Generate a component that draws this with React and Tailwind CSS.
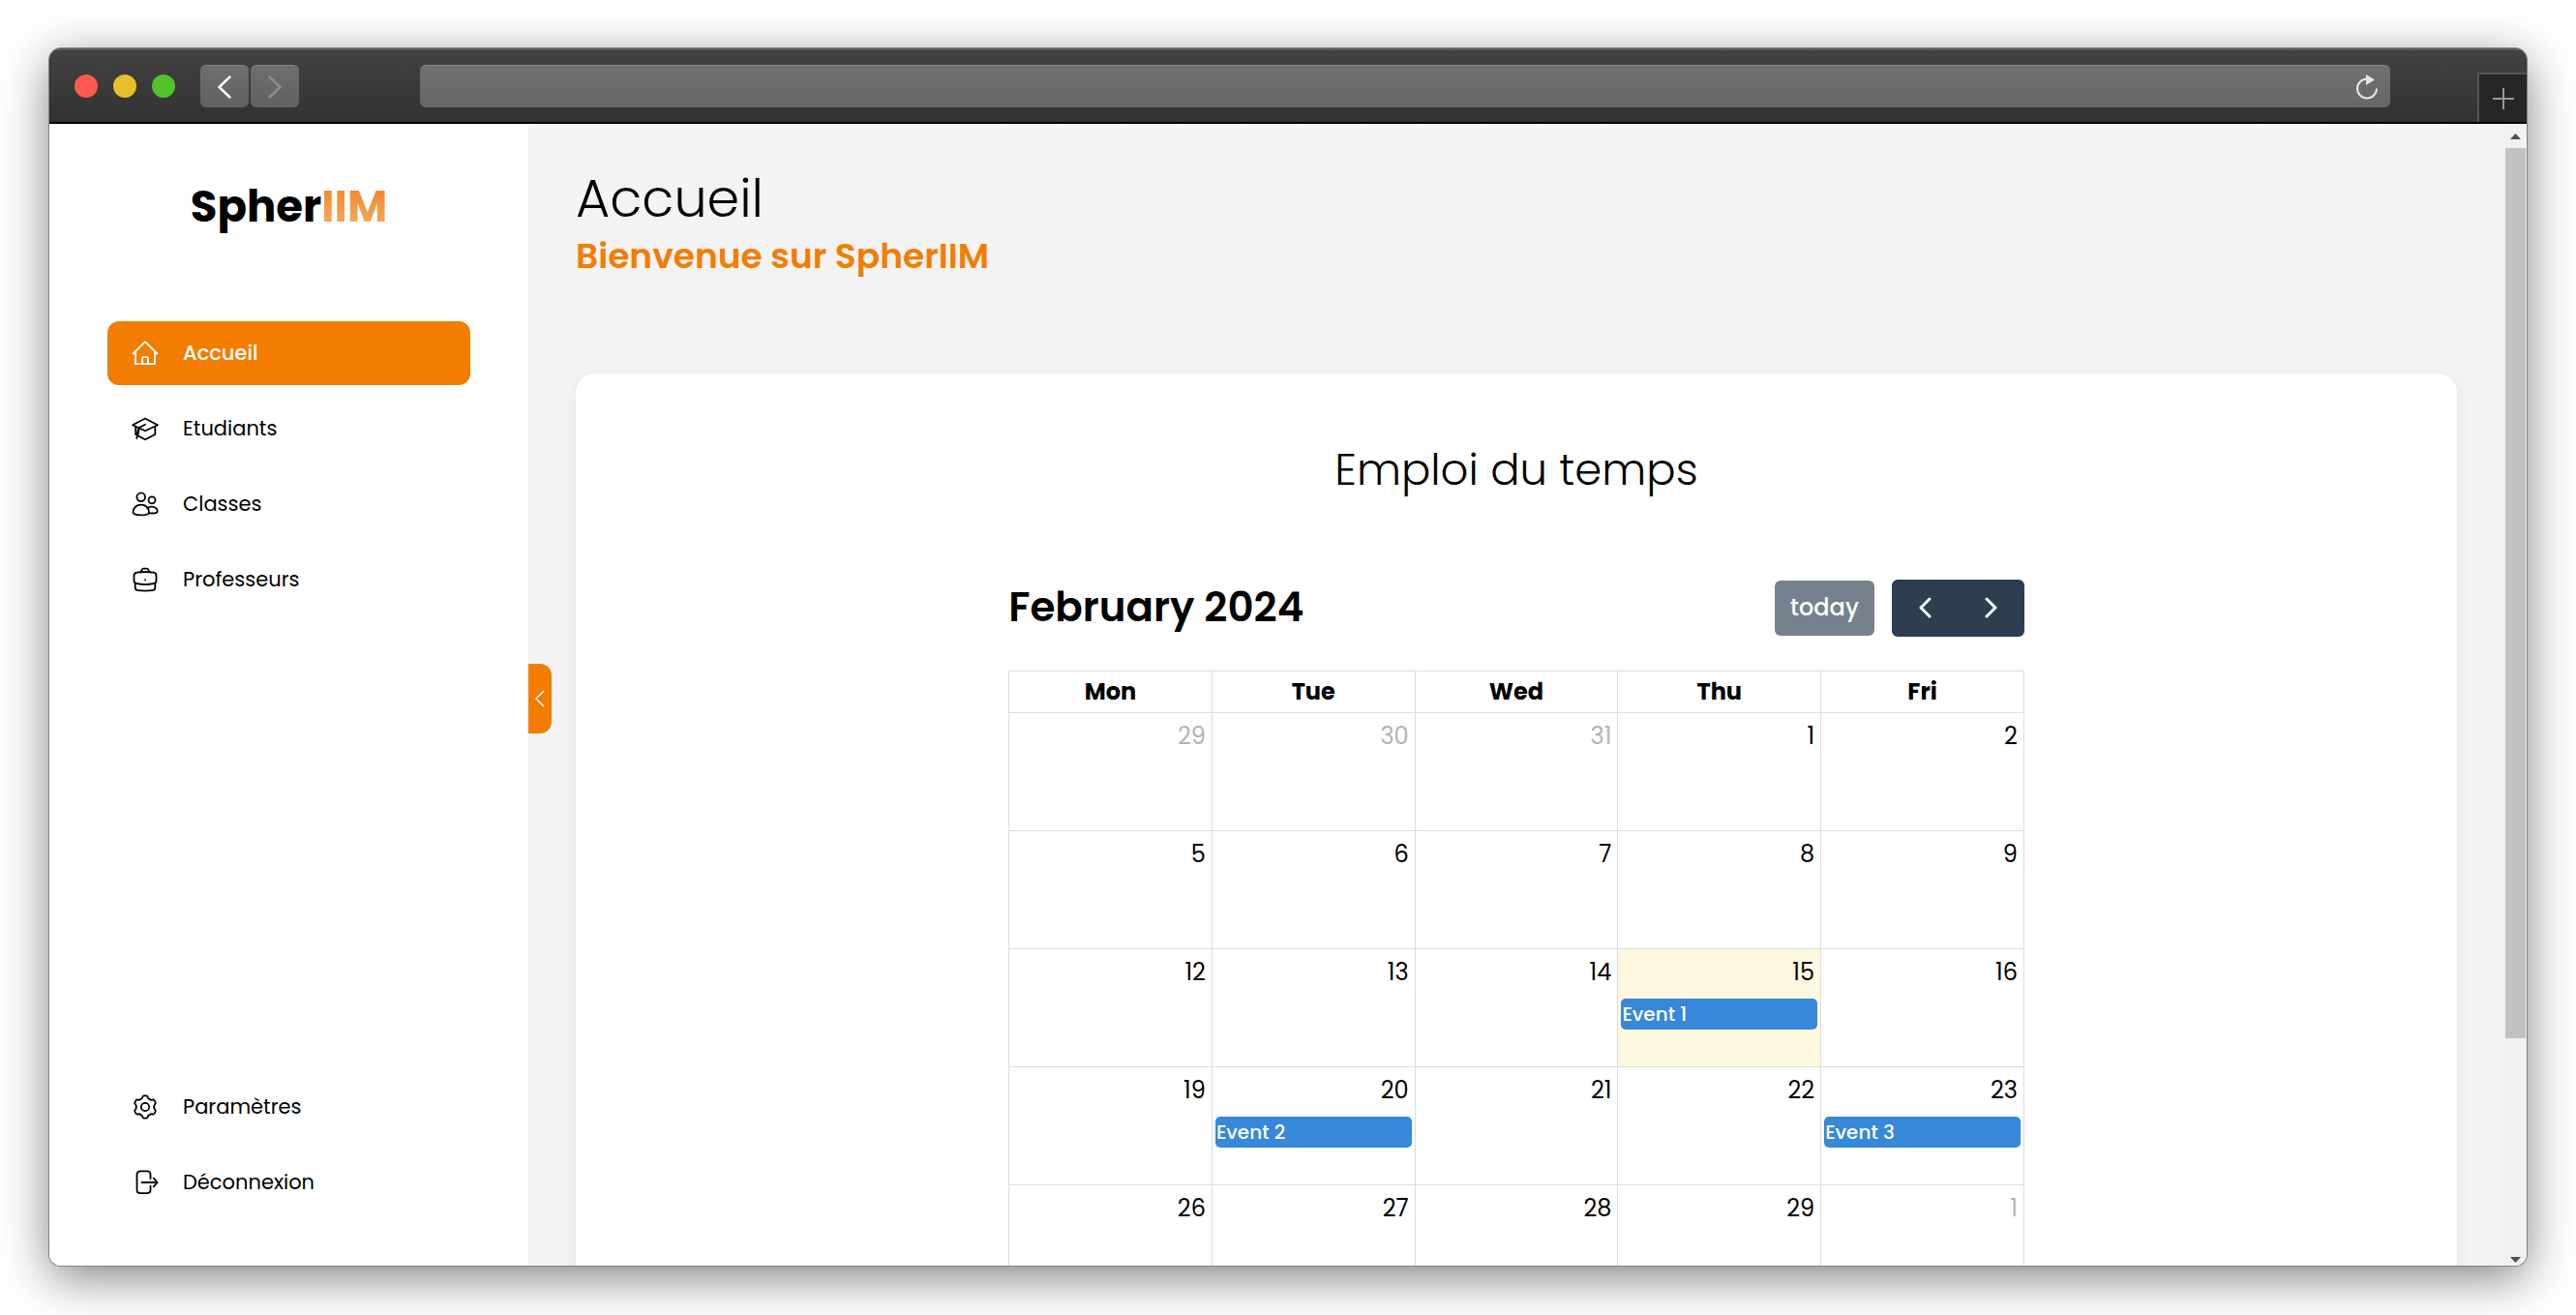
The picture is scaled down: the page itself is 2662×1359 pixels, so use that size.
const stroke = {
  viewBox: "0 0 30 30",
  fill: "none",
  stroke: "currentColor",
  strokeWidth: 1.8,
  strokeLinecap: "round",
  strokeLinejoin: "round",
  className: "size-[30px] shrink-0",
  "aria-hidden": true,
};

function HomeIcon() {
  return (
    <svg {...stroke}>
      <path d="M2.500 15.500 15 3.200l12.500 12.300" />
      <path d="M5 13.500V26.200h20V13.500" />
      <path d="M12 26v-5.500a1.500 1.500 0 0 1 1.500-1.500h3a1.500 1.500 0 0 1 1.500 1.500V26" />
    </svg>
  );
}

function StudentIcon() {
  return (
    <svg {...stroke}>
      <path d="M2 11.200 15 4.500l13 6.700-13 6z" />
      <path d="M5.200 13v8L15 26.300l10.300-5.300v-8" />
      <path d="M15 10.700 9 13.700C7.500 17 8 20.500 6.200 25" />
      <path d="M8.500 14.500 7 21" strokeWidth="2.500" />
    </svg>
  );
}

function UsersIcon() {
  return (
    <svg {...stroke}>
      <circle cx="10.700" cy="7.700" r="4.300" />
      <circle cx="22" cy="10.800" r="3.500" />
      <path d="M2.500 23.500c0-5 3.700-7.800 8.200-7.800s8.300 2.800 8.300 7.800c0 1.800-3.800 2.900-8.300 2.900s-8.200-1.100-8.200-2.900Z" />
      <path d="M17.500 19.500c1-1.300 2.700-1.800 4.300-1.800 3.300 0 5.900 2 5.900 4.500 0 1.700-2.700 2.300-5.200 2.300-1.500 0-2.700-.1-3.700-.4" />
    </svg>
  );
}

function BriefcaseIcon() {
  return (
    <svg {...stroke}>
      <path d="M10.500 7.200 11.500 5c.3-.8.900-1.300 1.800-1.300h3.400c.9 0 1.500.5 1.800 1.300l1 2.200" />
      <path d="M6.300 7.700c5.500-.9 11.900-.9 17.400 0 1.900.3 2.800 1.300 2.800 3.200V16c0 2-1.200 2.900-3 3.200-5.500 1.100-11.500 1.100-17 0-1.800-.3-3-1.200-3-3.200v-5.100c0-1.900.900-2.900 2.800-3.200Z" />
      <path d="M4.700 18.700v4.600c0 1.700.8 2.600 2.500 2.800 5.200.6 10.400.6 15.600 0 1.700-.2 2.500-1.100 2.500-2.800v-4.600" />
      <path d="M15 15.200v.1" />
    </svg>
  );
}

const GEAR_TEETH = [0, 60, 120, 180, 240, 300];

function GearIcon() {
  return (
    <svg {...stroke}>
      <circle cx="15" cy="15" r="4.200" />
      {GEAR_TEETH.map((a) => (
        <path
          key={a}
          transform={"rotate(" + a + " 15 15)"}
          d="M10.350 6.950Q12.100 6.300 12.300 4.900 12.500 3.400 14 3.400H16Q17.500 3.400 17.700 4.900 17.900 6.300 19.650 6.950"
        />
      ))}
    </svg>
  );
}

function LogoutIcon() {
  return (
    <svg {...stroke}>
      <path d="M20.500 11V7c0-2.500-1.200-3.700-3.700-3.700h-6.600C7.700 3.300 6.500 4.500 6.500 7v15.500c0 2.500 1.200 3.700 3.700 3.700h6.600c2.500 0 3.700-1.200 3.700-3.700v-3.800" />
      <path d="M11.500 15H27.700M23.700 10.700l4 4.300-4 4.300" />
    </svg>
  );
}

function NavItem({ icon, label, active }) {
  return (
    <li>
      <a
        href="#"
        aria-current={active ? "page" : undefined}
        className={
          "flex h-[66px] items-center gap-6 rounded-xl px-6 text-[21px] " +
          (active ? "bg-[#f27d00] font-medium text-white" : "text-black")
        }
      >
        {icon}
        {label}
      </a>
    </li>
  );
}

function Sidebar() {
  return (
    <aside className="relative flex w-[495px] shrink-0 flex-col bg-white px-[60px] pb-[53px] pt-14">
      <div className="text-center text-[45px] font-bold leading-[60px] text-black">
        Spher
        <span className="bg-linear-to-b from-[#f27d00] to-[#f5b26b] bg-clip-text text-transparent">IIM</span>
      </div>
      <nav className="mt-[88px] flex grow flex-col justify-between">
        <ul className="flex flex-col gap-3">
          <NavItem icon={<HomeIcon />} label="Accueil" active />
          <NavItem icon={<StudentIcon />} label="Etudiants" />
          <NavItem icon={<UsersIcon />} label="Classes" />
          <NavItem icon={<BriefcaseIcon />} label="Professeurs" />
        </ul>
        <ul className="flex flex-col gap-3">
          <NavItem icon={<GearIcon />} label="Paramètres" />
          <NavItem icon={<LogoutIcon />} label="Déconnexion" />
        </ul>
      </nav>
      <button
        aria-label="Réduire le menu"
        className="absolute left-full top-[558px] z-10 flex h-18 w-6 items-center justify-center rounded-r-xl bg-[#f27d00] text-white"
      >
        <svg viewBox="0 0 10 18" className="h-[18px] w-[10px]" fill="none" stroke="currentColor" strokeWidth="1.500">
          <path d="M9 1 1 9l8 8" />
        </svg>
      </button>
    </aside>
  );
}

const DAYS = ["Mon", "Tue", "Wed", "Thu", "Fri"];
const WEEKS = [
  [29, 30, 31, 1, 2],
  [5, 6, 7, 8, 9],
  [12, 13, 14, 15, 16],
  [19, 20, 21, 22, 23],
  [26, 27, 28, 29, 1],
];
const EVENTS = { "2-3": "Event 1", "3-1": "Event 2", "3-4": "Event 3" };
const OTHER_MONTH = ["0-0", "0-1", "0-2", "4-4"];

function Chevron({ d }) {
  return (
    <svg
      viewBox="0 0 14 24"
      className="h-6 w-3.5"
      fill="none"
      stroke="currentColor"
      strokeWidth="3"
      strokeLinecap="round"
      strokeLinejoin="round"
      aria-hidden="true"
    >
      <path d={d} />
    </svg>
  );
}

function Calendar() {
  return (
    <div className="mx-auto w-[54%]">
      <div className="mb-[35px] flex items-center justify-between">
        <h3 className="text-[42px] font-semibold leading-[60px]">February 2024</h3>
        <div className="flex items-center gap-[18px]">
          <button disabled className="h-[57px] rounded-md bg-[#77818d] px-4 text-2xl font-medium text-white">
            today
          </button>
          <div className="flex h-[59px] overflow-hidden rounded-md bg-[#2c3e50] text-white">
            <button aria-label="Mois précédent" className="flex w-[69px] items-center justify-center">
              <Chevron d="M12 3 3 12l9 9" />
            </button>
            <button aria-label="Mois suivant" className="flex w-[68px] items-center justify-center">
              <Chevron d="m2 3 9 9-9 9" />
            </button>
          </div>
        </div>
      </div>
      <table className="w-full table-fixed border-collapse border border-[#ddd] text-2xl">
        <thead>
          <tr className="h-[43px]">
            {DAYS.map((d) => (
              <th key={d} scope="col" className="border border-[#ddd] p-0 font-bold leading-9">
                {d}
              </th>
            ))}
          </tr>
        </thead>
        <tbody>
          {WEEKS.map((week, w) => (
            <tr key={w} className="h-[122px]">
              {week.map((day, d) => {
                const id = w + "-" + d;
                return (
                  <td
                    key={id}
                    className={"border border-[#ddd] p-0 align-top " + (id === "2-3" ? "bg-[#fff8e0]" : "")}
                  >
                    <div
                      className={
                        "px-1.5 pt-1.5 text-right leading-9 " +
                        (OTHER_MONTH.includes(id) ? "text-[#b3b3b3]" : "text-black")
                      }
                    >
                      {day}
                    </div>
                    {EVENTS[id] && (
                      <a
                        href="#"
                        className="mx-[3px] mt-[9px] block rounded-[5px] bg-[#3788d8] px-px text-xl font-medium leading-8 text-white"
                      >
                        {EVENTS[id]}
                      </a>
                    )}
                  </td>
                );
              })}
            </tr>
          ))}
        </tbody>
      </table>
    </div>
  );
}

function BrowserBar() {
  return (
    <header className="flex h-[78px] shrink-0 items-center border-b-2 border-black bg-linear-to-b from-[#424242] to-[#323232] pl-[26px] pt-0.5 shadow-[inset_0_2px_0_#5c5c5c]">
      <div className="flex gap-4">
        <span className="size-6 rounded-full bg-[#ff5a52]" />
        <span className="size-6 rounded-full bg-[#e6c029]" />
        <span className="size-6 rounded-full bg-[#54c22b]" />
      </div>
      <div className="ml-[26px] flex gap-0.5">
        <button
          aria-label="Page précédente"
          className="flex h-11 w-[50px] items-center justify-center rounded-md border-t border-[#808080] bg-linear-to-b from-[#6e6e6e] to-[#616161] text-white"
        >
          <svg viewBox="0 0 14 24" className="h-6 w-3.5" fill="none" stroke="currentColor" strokeWidth="2.500" strokeLinecap="round">
            <path d="M12.500 1.500 1.500 12l11 10.500" />
          </svg>
        </button>
        <button
          aria-label="Page suivante"
          className="flex h-11 w-[50px] items-center justify-center rounded-md border-t border-[#808080] bg-linear-to-b from-[#6e6e6e] to-[#616161] text-[#8e8e8e]"
        >
          <svg viewBox="0 0 14 24" className="h-6 w-3.5" fill="none" stroke="currentColor" strokeWidth="2.500" strokeLinecap="round">
            <path d="m1.500 1.500 11 10.500-11 10.500" />
          </svg>
        </button>
      </div>
      <div className="ml-[125px] mr-[90px] flex h-11 grow items-center rounded-md border-t border-[#888] bg-linear-to-b from-[#707070] to-[#676767] pr-3">
        <input aria-label="Adresse" className="h-full min-w-0 grow bg-transparent px-3 text-xl text-white outline-none" />
        <button aria-label="Actualiser" className="text-[#e6e6e6]">
          <svg viewBox="0 0 24 28" className="h-7 w-6" fill="none" stroke="currentColor" strokeWidth="2">
            <path d="M22 15.500A10 10 0 1 1 12 5.500" />
            <path d="M11 1v11l9-5.500z" fill="currentColor" stroke="none" />
          </svg>
        </button>
      </div>
      <button
        aria-label="Nouvel onglet"
        className="flex h-[51px] w-[51px] shrink-0 items-center justify-center self-end border-l-2 border-t-2 border-[#555] bg-[#262626] text-[#999]"
      >
        <svg viewBox="0 0 22 22" className="size-[22px]" fill="none" stroke="currentColor" strokeWidth="2">
          <path d="M11 0v22M0 11h22" />
        </svg>
      </button>
    </header>
  );
}

function Scrollbar() {
  return (
    <div className="flex w-6 shrink-0 flex-col items-center bg-[#f1f1f1]" aria-hidden="true">
      <svg viewBox="0 0 11 6" className="mb-[9px] mt-[10px] h-1.5 w-[11px] shrink-0 fill-[#505050]">
        <path d="M0 6h11L5.500 0z" />
      </svg>
      <div className="h-[78%] w-[21px] bg-[#c1c1c1]" />
      <svg viewBox="0 0 11 6" className="mb-[3px] mt-auto h-1.5 w-[11px] shrink-0 fill-[#505050]">
        <path d="M0 0h11L5.500 6z" />
      </svg>
    </div>
  );
}

export default function App() {
  return (
    <div className="h-screen overflow-hidden bg-white px-[51px] pb-[51px] pt-[50px] font-['Poppins','Inter',sans-serif] text-black">
      <div className="flex h-full flex-col overflow-hidden rounded-xl shadow-[0_0_0_1px_#808080,0_12px_50px_rgba(0,0,0,0.5)]">
        <BrowserBar />
        <div className="flex min-h-0 grow">
          <Sidebar />
          <main className="min-w-0 grow overflow-hidden bg-[#f3f3f3] pl-[49px] pr-12 pt-[42px]">
            <h1 className="text-[54px] font-light leading-[70px]">Accueil</h1>
            <h2 className="text-4xl font-semibold leading-[50px] text-[#f27d00]">Bienvenue sur SpherIIM</h2>
            <section className="mt-24 min-h-full rounded-[20px] bg-white pt-[66px] shadow-[0_4px_20px_rgba(0,0,0,0.06)]">
              <h2 className="mb-[78px] text-center text-[45px] font-light leading-[68px]">Emploi du temps</h2>
              <Calendar />
            </section>
          </main>
          <Scrollbar />
        </div>
      </div>
    </div>
  );
}
